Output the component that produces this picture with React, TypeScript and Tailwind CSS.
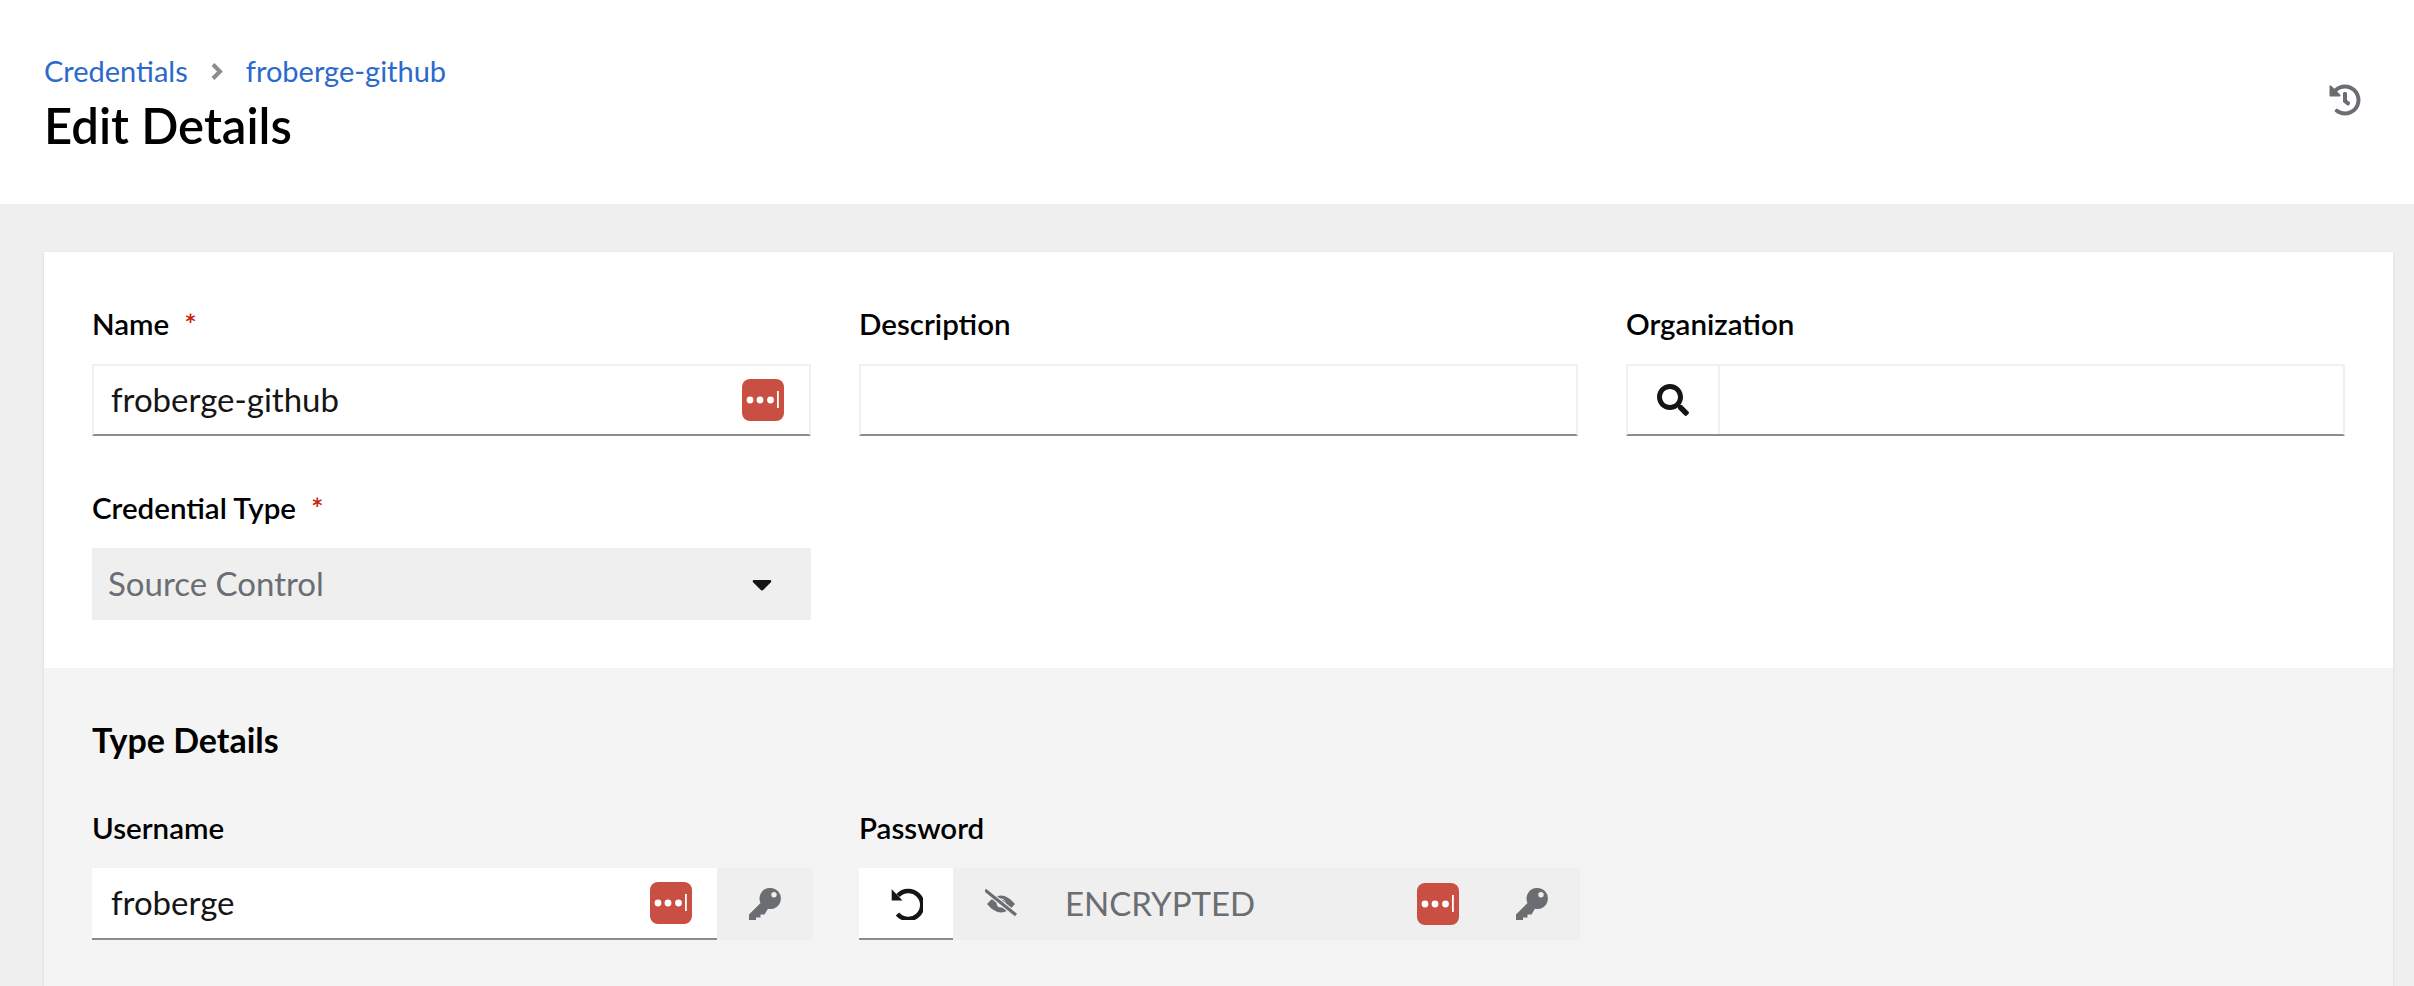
import { FaCaretDown, FaHistory, FaSearch } from "react-icons/fa";

function LastPassIcon() {
  return (
    <svg viewBox="0 0 42 42" className="h-[42px] w-[42px] shrink-0">
      <rect width="42" height="42" rx="8" fill="#c94f43" />
      <circle cx="8" cy="21" r="3.4" fill="#fff" />
      <circle cx="18" cy="21" r="3.4" fill="#fff" />
      <circle cx="28.5" cy="21" r="3.4" fill="#fff" />
      <rect x="35" y="12" width="1.8" height="17" fill="#fff" />
    </svg>
  );
}

function KeyIcon() {
  return (
    <svg viewBox="0 0 32 32" className="h-[32px] w-[32px]" fill="currentColor">
      <path
        fillRule="evenodd"
        d="M21.5 0a10.5 10.5 0 1 1-2.6 20.7L15.5 26.500H11.500v3H7v2.500H0v-5.500L11.500 15A10.500 10.500 0 0 1 21.500 0zM25 4a2.700 2.700 0 1 0 0 5.400 2.700 2.700 0 0 0 0-5.400z"
      />
    </svg>
  );
}

function UndoIcon() {
  return (
    <svg viewBox="0 0 33 33" className="h-[33px] w-[33px]">
      <path d="M8 8.500A14 14 0 1 1 7.500 27" fill="none" stroke="currentColor" strokeWidth="4.500" />
      <path d="M1.700 2.300V13.500H12.500z" fill="currentColor" />
    </svg>
  );
}

function EyeOffIcon() {
  return (
    <svg viewBox="0 0 32 32" className="h-[32px] w-[32px]">
      <path d="M2 16Q16-1 30 16Q16 33 2 16z" fill="currentColor" />
      <circle cx="16" cy="15" r="4.500" fill="#efefef" />
      <circle cx="17" cy="14.500" r="2.800" fill="currentColor" />
      <path d="M0 2L31 27" stroke="#efefef" strokeWidth="5.500" />
      <path d="M0 2L31 27" stroke="currentColor" strokeWidth="3.200" />
    </svg>
  );
}

function Label({ text, required }: { text: string; required?: boolean }) {
  return (
    <label className="mb-[16px] flex h-[48px] items-center text-[29.5px] font-semibold text-black">
      {text}
      {required && <span className="ml-[15px] text-[#c9190b]">*</span>}
    </label>
  );
}

function TextBox({ value, lastPass }: { value?: string; lastPass?: boolean }) {
  return (
    <div className="flex h-[72px] items-center justify-between border-2 border-[#f0f0f0] border-b-[#8a8d90] bg-white pl-[17px] pr-[25px] text-[33px] text-[#151515]">
      <span>{value}</span>
      {lastPass && <LastPassIcon />}
    </div>
  );
}

function App() {
  return (
    <div className="h-[986px] overflow-hidden bg-[#efefef] font-['Lato',sans-serif]">
      {/* Page header */}
      <header className="flex h-[204px] items-start justify-between bg-white px-[44px] pt-[48px]">
        <div>
          <nav className="flex h-[46px] items-center text-[29px] text-[#2b69cc]">
            <a>Credentials</a>
            <svg viewBox="0 0 12 17" className="mx-[23px] h-[17px] w-[12px]">
              <path d="M2 1.500L9 8.500L2 15.500" fill="none" stroke="#8a8d90" strokeWidth="4" />
            </svg>
            <a>froberge-github</a>
          </nav>
          <h1 className="text-[49px] font-semibold leading-[62px] text-black">Edit Details</h1>
        </div>
        <FaHistory className="mr-[9px] mt-[36px] text-[32px] text-[#6a6e73]" />
      </header>

      <main className="pl-[44px] pr-[21px] pt-[48px]">
        <div className="bg-white shadow-sm">
          <div className="grid grid-cols-3 gap-x-[48px] gap-y-[48px] p-[48px]">
            <div>
              <Label text="Name" required />
              <TextBox value="froberge-github" lastPass />
            </div>
            <div>
              <Label text="Description" />
              <TextBox />
            </div>
            <div>
              <Label text="Organization" />
              <div className="flex h-[72px] border-2 border-[#f0f0f0] border-b-[#8a8d90] bg-white">
                <div className="flex w-[92px] items-center justify-center border-r-2 border-[#f0f0f0] text-[#151515]">
                  <FaSearch className="text-[32px]" />
                </div>
              </div>
            </div>
            <div>
              <Label text="Credential Type" required />
              <div className="flex h-[72px] items-center justify-between bg-[#efefef] pl-[16px] pr-[33px] text-[33px] text-[#6a6e73]">
                <span>Source Control</span>
                <FaCaretDown className="text-[32px] text-[#151515]" />
              </div>
            </div>
          </div>

          <section className="bg-[#f4f4f4] px-[48px] pb-[60px] pt-[48px]">
            <h2 className="mb-[40px] text-[34px] font-bold leading-[48px] text-black">Type Details</h2>
            <div className="grid grid-cols-3 gap-x-[48px]">
              <div>
                <Label text="Username" />
                <div className="-mr-[2px] flex h-[72px] bg-[#efefef]">
                  <div className="flex flex-1 items-center justify-between border-b-2 border-[#8a8d90] bg-white pl-[19px] pr-[25px] text-[33px] text-[#151515]">
                    <span>froberge</span>
                    <LastPassIcon />
                  </div>
                  <div className="flex w-[96px] items-center justify-center text-[#6a6e73]">
                    <KeyIcon />
                  </div>
                </div>
              </div>
              <div>
                <Label text="Password" />
                <div className="-mr-[2px] flex h-[72px] items-center bg-[#efefef] text-[33px] text-[#6a6e73]">
                  <div className="flex h-full w-[94px] items-center justify-center border-b-2 border-[#8a8d90] bg-white text-[#151515]">
                    <UndoIcon />
                  </div>
                  <div className="ml-[32px]">
                    <EyeOffIcon />
                  </div>
                  <span className="ml-[48px]">ENCRYPTED</span>
                  <div className="ml-auto flex items-center">
                    <LastPassIcon />
                    <div className="ml-[25px] flex w-[96px] items-center justify-center">
                      <KeyIcon />
                    </div>
                  </div>
                </div>
              </div>
            </div>
          </section>
        </div>
      </main>
    </div>
  );
}

export default App;
